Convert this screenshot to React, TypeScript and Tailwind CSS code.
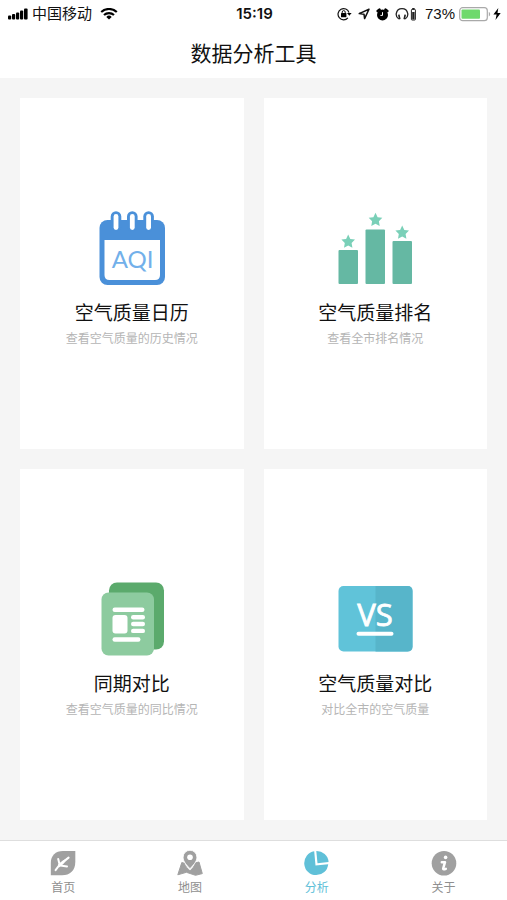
import type { ReactNode } from "react";

const latin = "font-['Liberation_Sans','Noto_Sans_CJK_SC',sans-serif]";

function Signal() {
  return (
    <svg width="20" height="12" viewBox="0 0 20 12" aria-hidden="true">
      <rect x="0" y="7.5" width="3.2" height="4" rx="1" />
      <rect x="4" y="6" width="3.2" height="5.5" rx="1" />
      <rect x="8" y="4.5" width="3.2" height="7" rx="1" />
      <rect x="12" y="2.5" width="3.2" height="9" rx="1" />
      <rect x="16" y="0.5" width="3.6" height="11" rx="1" />
    </svg>
  );
}

function Wifi() {
  return (
    <svg width="18" height="13" viewBox="0 0 18 13" fill="none" stroke="#000" strokeWidth="2.1" aria-hidden="true">
      <path d="M1.2 4.1A11.2 11.2 0 0 1 16.8 4.1" />
      <path d="M4 7.1A7.2 7.2 0 0 1 14 7.1" />
      <path d="M9 11.6L6.3 8.9A3.9 3.9 0 0 1 11.7 8.9Z" fill="#000" stroke="none" />
    </svg>
  );
}

function RotationLock() {
  return (
    <svg width="15" height="14" viewBox="0 0 15 14" aria-hidden="true">
      <path d="M10.9 10.8A5.6 5.6 0 1 1 12 5.6" fill="none" stroke="#111" strokeWidth="1.2" />
      <path d="M10 6H14.6L12.3 8.8Z" />
      <rect x="4" y="6" width="5.4" height="4.2" rx="0.5" />
      <path d="M5.2 6.5V5.1a1.5 1.5 0 0 1 3 0V6.5" fill="none" stroke="#111" />
    </svg>
  );
}

function LocationArrow() {
  return (
    <svg width="12" height="12" viewBox="0 0 12 12" fill="none" stroke="#111" strokeWidth="1.5" strokeLinejoin="round" aria-hidden="true">
      <path d="M11 1.2L1.2 5.6L6 6.2L6.6 10.6Z" />
    </svg>
  );
}

function Alarm() {
  return (
    <svg width="13" height="13" viewBox="0 0 13 13" aria-hidden="true">
      <circle cx="6.5" cy="6.9" r="5.5" />
      <path d="M1.6 3L3.6 1.6M11.4 3L9.4 1.6" stroke="#000" strokeWidth="2.4" strokeLinecap="round" />
      <path d="M6.5 4.2V7.4H4.4" fill="none" stroke="#fff" />
    </svg>
  );
}

function Headphones() {
  return (
    <svg width="22" height="14" viewBox="0 0 22 14" aria-hidden="true">
      <path d="M3.8 12C1.3 10.5 1 8.2 1.3 6.4C1.9 3.1 4.3 1.6 7 1.6S12.1 3.1 12.7 6.4C13 8.2 12.7 10.5 10.2 12" fill="none" stroke="#222" strokeWidth="1.3" />
      <path d="M3 7.8L4.6 7.4L5.6 12L4 12.5ZM11 7.8L9.4 7.4L8.4 12L10 12.5Z" fill="#222" />
      <rect x="16.4" y="2.4" width="4" height="10.6" rx="0.7" fill="none" stroke="#222" />
      <rect x="17.2" y="1" width="2.4" height="1.4" fill="#222" />
      <rect x="17.2" y="5" width="2.4" height="7.4" fill="#222" />
    </svg>
  );
}

function Battery() {
  return (
    <svg width="32" height="15" viewBox="0 0 32 15" aria-hidden="true">
      <rect x="0.7" y="0.7" width="27.6" height="13" rx="3" fill="#fff" stroke="#a9a9a9" strokeWidth="1.2" />
      <rect x="2.5" y="2.6" width="18.5" height="9.2" rx="1" fill="#6fd96c" />
      <path d="M29.8 5C31.6 5.4 31.6 9 29.8 9.4Z" fill="#a9a9a9" />
    </svg>
  );
}

function Bolt() {
  return (
    <svg width="8" height="12" viewBox="0 0 8 12" aria-hidden="true">
      <path d="M5.3 0L0.4 6.6H3.6L2.5 12L7.7 5H4.5Z" />
    </svg>
  );
}

function CalendarArt() {
  return (
    <svg width="76" height="76" viewBox="0 0 76 76" aria-hidden="true">
      <rect x="5.5" y="10" width="65.5" height="65" rx="8" fill="#4a90d9" />
      <path d="M10.5 30H66V65Q66 70 61 70H15.5Q10.5 70 10.5 65Z" fill="#fff" />
      {[22, 38.3, 54.6].map((x) => (
        <g key={x}>
          <rect x={x - 5.3} y="1.2" width="10.6" height="20" rx="5.3" fill="#4a90d9" />
          <rect x={x - 2.4} y="4" width="4.8" height="16" rx="2.4" fill="#fff" />
        </g>
      ))}
      <text x="38.5" y="57.5" textAnchor="middle" fontSize="24" fill="#72b0ea" className="font-['Lato',sans-serif]">AQI</text>
    </svg>
  );
}

const star = "M0 -7L2.1 -2.6L6.8 -2L3.4 1.4L4.2 6.2L0 4L-4.2 6.2L-3.4 1.4L-6.8 -2L-2.1 -2.6Z";

function RankingArt() {
  return (
    <svg width="76" height="76" viewBox="0 0 76 76" aria-hidden="true">
      <g fill="#65b8a3">
        <rect x="1.5" y="40" width="19.5" height="34" rx="1" />
        <rect x="28.5" y="19.5" width="19.5" height="54.5" rx="1" />
        <rect x="55.5" y="31" width="19.5" height="43" rx="1" />
      </g>
      <g fill="#7ad0b8">
        <path d={star} transform="translate(11.2 31.5)" />
        <path d={star} transform="translate(38.5 9.8)" />
        <path d={star} transform="translate(65.2 22.5)" />
      </g>
    </svg>
  );
}

function ReportArt() {
  return (
    <svg width="76" height="76" viewBox="0 0 76 76" aria-hidden="true">
      <rect x="15" y="1.5" width="55" height="67" rx="8" fill="#5baa6c" />
      <rect x="7.5" y="11.5" width="52.5" height="63" rx="7" fill="#8dcb9f" />
      <g fill="#fff">
        <rect x="18.5" y="26.5" width="32" height="4.4" rx="2.2" />
        <rect x="18.5" y="34" width="15" height="18.5" rx="3" />
        <rect x="37" y="34" width="14" height="4.4" rx="2.2" />
        <rect x="37" y="40.8" width="14" height="4.4" rx="2.2" />
        <rect x="37" y="47.7" width="14" height="4.4" rx="2.2" />
        <rect x="18.5" y="56.3" width="28" height="4.4" rx="2.2" />
      </g>
    </svg>
  );
}

function VersusArt() {
  return (
    <svg width="76" height="76" viewBox="0 0 76 76" aria-hidden="true">
      <rect x="1.5" y="5" width="74" height="65.5" rx="5" fill="#60c3d9" />
      <path d="M38.5 5H70.5Q75.5 5 75.5 10V65.5Q75.5 70.5 70.5 70.5H38.5Z" fill="#57b5ca" />
      <text x="38" y="44.5" textAnchor="middle" fontSize="31" fill="#fff" stroke="#fff" strokeWidth="0.8" className="font-['Open_Sans',sans-serif]">VS</text>
      <rect x="19.5" y="50.8" width="37" height="4" rx="2" fill="#fff" />
    </svg>
  );
}

function LeafIcon() {
  return (
    <svg width="26" height="26" viewBox="0 0 26 26" aria-hidden="true">
      <path d="M13 1H25.3V12C25.3 20.5 20 25.3 12 25.3H.8V13C.8 5.5 5.5 1 13 1Z" fill="#a0a0a0" />
      <path d="M5.6 20.2L9.4 15L18.6 7.6M8.2 9L9.6 14.4M10.4 15.4L17 16.4" fill="none" stroke="#fff" strokeWidth="2" strokeLinecap="round" strokeLinejoin="round" />
      <path d="M8 14.5L12.5 10.8L19 7L13.5 13.8L9 17.5Z" fill="#fff" />
    </svg>
  );
}

function MapIcon() {
  return (
    <svg width="26" height="26" viewBox="0 0 26 26" aria-hidden="true">
      <path d="M4.8 12.5L7.2 13.2C8.4 16.2 10.6 18.8 13 20.8C15.8 18.6 17.4 16 18.6 12.8L22 12L25.3 23.6L18.5 25.3L9.4 22.3L.8 24.8Z" fill="#a0a0a0" stroke="#a0a0a0" strokeLinejoin="round" />
      <path d="M13 .3A6.9 6.9 0 0 1 19.9 7.2C19.9 12 15.8 15.5 13 18.7C10.2 15.5 6.1 12 6.1 7.2A6.9 6.9 0 0 1 13 .3Z" fill="#a0a0a0" stroke="#fff" strokeWidth="0.8" />
      <circle cx="13" cy="7.3" r="2.8" fill="#fff" />
    </svg>
  );
}

function PieIcon() {
  return (
    <svg width="26" height="26" viewBox="0 0 26 26" aria-hidden="true">
      <path d="M10.2 1.3A12 12 0 1 0 24.2 14.2L11.5 15.4Z" fill="#60c0d8" />
      <path d="M12.3 1A12 12 0 0 1 24.6 12.1L13.5 13.2Z" fill="#60c0d8" />
    </svg>
  );
}

function InfoIcon() {
  return (
    <svg width="26" height="26" viewBox="0 0 26 26" aria-hidden="true">
      <circle cx="13" cy="13.2" r="12.3" fill="#a0a0a0" />
      <circle cx="14.6" cy="7.4" r="1.8" fill="#fff" />
      <path d="M10.8 12.2H14L12.2 18.5Q12 20 14.8 18.8" fill="none" stroke="#fff" strokeWidth="2.5" strokeLinecap="round" strokeLinejoin="round" />
    </svg>
  );
}

const tools: { title: string; note: string; art: ReactNode }[] = [
  { title: "空气质量日历", note: "查看空气质量的历史情况", art: <CalendarArt /> },
  { title: "空气质量排名", note: "查看全市排名情况", art: <RankingArt /> },
  { title: "同期对比", note: "查看空气质量的同比情况", art: <ReportArt /> },
  { title: "空气质量对比", note: "对比全市的空气质量", art: <VersusArt /> },
];

const tabs: { label: string; icon: ReactNode; active?: boolean }[] = [
  { label: "首页", icon: <LeafIcon /> },
  { label: "地图", icon: <MapIcon /> },
  { label: "分析", icon: <PieIcon />, active: true },
  { label: "关于", icon: <InfoIcon /> },
];

export default function App() {
  return (
    <div className="flex min-h-screen flex-col bg-[#f5f5f5] font-['Noto_Sans_CJK_SC',sans-serif] text-[#111]">
      <header className="bg-white pb-0.5">
        <div className={`grid h-7 grid-cols-[1fr_auto_1fr] items-center pr-1.5 pl-2 text-[15px] leading-5 ${latin}`}>
          <div className="flex items-center gap-1">
            <Signal />
            <span>中国移动</span>
            <span className="pl-1"><Wifi /></span>
          </div>
          <time className="font-['Inter',sans-serif] font-semibold">15:19</time>
          <div className="flex items-center justify-end gap-2">
            <div className="flex items-center gap-1.5">
              <RotationLock />
              <LocationArrow />
              <Alarm />
              <Headphones />
            </div>
            <div className="flex items-center gap-1">
              <span>73%</span>
              <div className="flex items-center gap-0.5">
                <Battery />
                <Bolt />
              </div>
            </div>
          </div>
        </div>
        <h1 className="text-center text-[21px] leading-[48px]">数据分析工具</h1>
      </header>
      <main className="grid flex-1 auto-rows-fr grid-cols-2 gap-5 p-5">
        {tools.map((tool) => (
          <button key={tool.title} type="button" className="flex flex-col items-center justify-center bg-white pt-2.5">
            {tool.art}
            <span className="mt-3 text-[19px] leading-7">{tool.title}</span>
            <span className="mt-0.5 text-[12px] leading-5 text-[#b5b5b5]">{tool.note}</span>
          </button>
        ))}
      </main>
      <nav className="grid h-[60px] grid-cols-4 border-t border-[#dedede] bg-white">
        {tabs.map((tab) => (
          <button
            key={tab.label}
            type="button"
            aria-current={tab.active ? "page" : undefined}
            className={`flex flex-col items-center justify-center gap-0.5 pt-1 text-[12px] leading-[18px] ${tab.active ? "text-[#60c0d8]" : "text-[#8f8f8f]"}`}
          >
            {tab.icon}
            <span>{tab.label}</span>
          </button>
        ))}
      </nav>
    </div>
  );
}
